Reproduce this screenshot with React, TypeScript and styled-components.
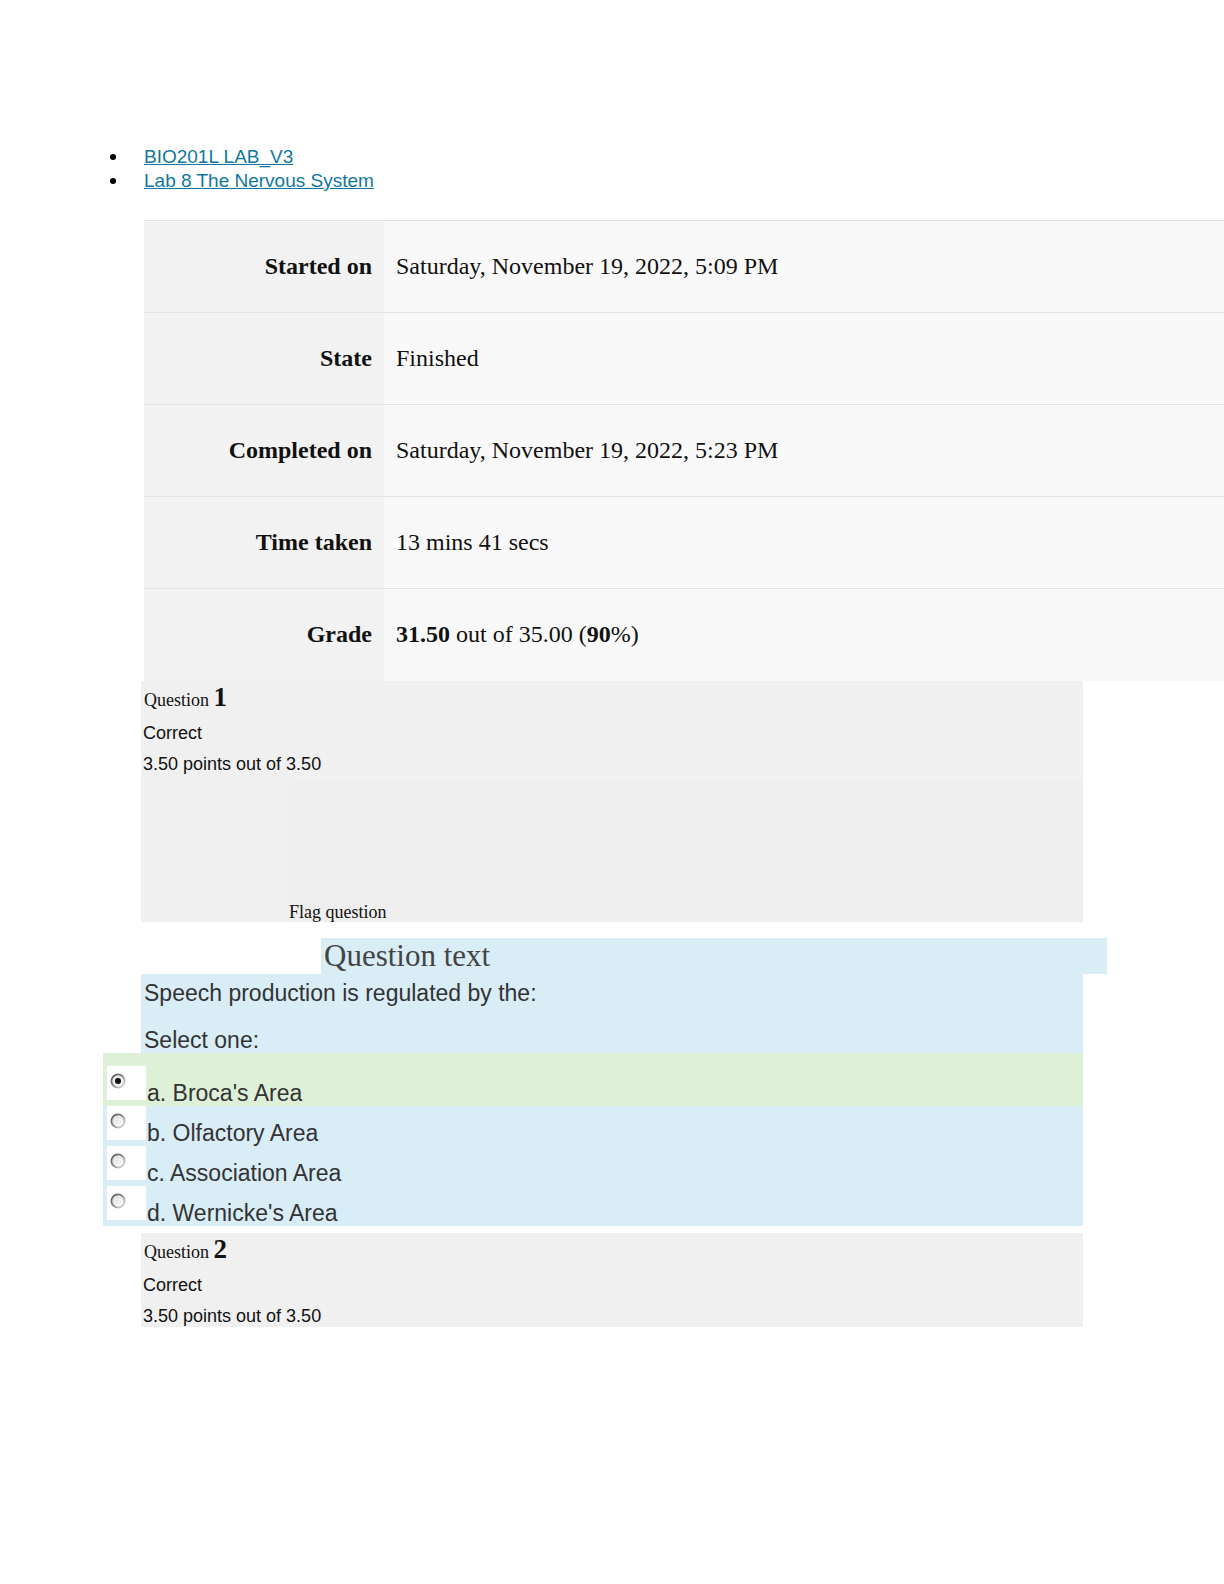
import React from 'react';
import styled, {createGlobalStyle} from 'styled-components';

const GlobalStyle = createGlobalStyle`
    body {
        margin: 0;
        background: #fff;
        font-family: "Liberation Sans", Arial, sans-serif;
    }
`;

interface SummaryRow {
    label: string;
    value: React.ReactNode;
}

const summary: SummaryRow[] = [
    {label: 'Started on', value: 'Saturday, November 19, 2022, 5:09 PM'},
    {label: 'State', value: 'Finished'},
    {label: 'Completed on', value: 'Saturday, November 19, 2022, 5:23 PM'},
    {label: 'Time taken', value: '13 mins 41 secs'},
    {label: 'Grade', value: <><b>31.50</b> out of 35.00 (<b>90</b>%)</>},
];

const answers = [
    {text: "a. Broca's Area", checked: true},
    {text: 'b. Olfactory Area', checked: false},
    {text: 'c. Association Area', checked: false},
    {text: "d. Wernicke's Area", checked: false},
];

function Radio({checked}: { checked: boolean }) {
    return (
        <svg width="16" height="16" viewBox="0 0 16 16">
            <defs>
                <linearGradient id="ring" x1="0" y1="0" x2="1" y2="1">
                    <stop offset="0" stopColor="#555"/>
                    <stop offset="0.5" stopColor="#8a8a8a"/>
                    <stop offset="1" stopColor="#e8e8e8"/>
                </linearGradient>
                <linearGradient id="fill" x1="0" y1="0" x2="1" y2="1">
                    <stop offset="0" stopColor="#dcdcdc"/>
                    <stop offset="1" stopColor="#ffffff"/>
                </linearGradient>
            </defs>
            <circle cx="8" cy="8" r="6.6" fill="url(#fill)" stroke="url(#ring)" strokeWidth="1.8"/>
            {checked && <circle cx="8" cy="8" r="3" fill="#111"/>}
        </svg>
    );
}

function QuestionHeader({no}: { no: number }) {
    return (
        <>
            <QuestionNo>Question <b>{no}</b></QuestionNo>
            <Info>Correct</Info>
            <Info>3.50 points out of 3.50</Info>
        </>
    );
}

function App() {
    return (
        <Page>
            <GlobalStyle/>
            <Breadcrumb>
                <li><Bullet/><a href="#">BIO201L LAB_V3</a></li>
                <li><Bullet/><a href="#">Lab 8 The Nervous System</a></li>
            </Breadcrumb>

            <Summary>
                <tbody>
                {summary.map((row) => (
                    <tr key={row.label}>
                        <th>{row.label}</th>
                        <td>{row.value}</td>
                    </tr>
                ))}
                </tbody>
            </Summary>

            <QuestionBlock>
                <QuestionHeader no={1}/>
                <FlagArea>Flag question</FlagArea>
            </QuestionBlock>

            <QuestionText>Question text</QuestionText>
            <Content>
                <Prompt>Speech production is regulated by the:</Prompt>
                <Prompt $gap>Select one:</Prompt>
                <Answers>
                    {answers.map((a) => (
                        <AnswerRow key={a.text} $correct={a.checked}>
                            <RadioBox><Radio checked={a.checked}/></RadioBox>
                            <AnswerLabel>{a.text}</AnswerLabel>
                        </AnswerRow>
                    ))}
                </Answers>
            </Content>

            <QuestionBlock $spaced>
                <QuestionHeader no={2}/>
            </QuestionBlock>
        </Page>
    );
}

const Page = styled.div`
    padding-bottom: 200px;
`;

const Breadcrumb = styled.ul`
    list-style: none;
    margin: 145px 0 0;
    padding: 0;
    font-size: 19px;
    line-height: 24px;

    li {
        display: flex;
        align-items: center;
    }

    a {
        color: #1177a2;
        text-decoration: underline;
    }
`;

const Bullet = styled.span`
    width: 6px;
    height: 6px;
    border-radius: 50%;
    background: #000;
    margin: 0 28px 0 110px;
`;

const Summary = styled.table`
    margin: 27px 0 0 144px;
    width: 1080px;
    border-collapse: collapse;
    font-family: "Liberation Serif", "Times New Roman", serif;
    font-size: 24px;
    color: #111;

    tr {
        height: 92px;
        border-top: 1px solid #e3e3e3;
    }

    th {
        width: 228px;
        padding: 0 12px 0 0;
        text-align: right;
        background: #f2f2f2;
        font-weight: bold;
    }

    td {
        padding: 0 0 0 12px;
        background: #f9f9f9;
    }
`;

const QuestionBlock = styled.div<{ $spaced?: boolean }>`
    margin: ${({$spaced}) => ($spaced ? '7px' : '0')} 0 0 141px;
    width: 942px;
    background: #f0f0f0;
    color: #111;
    padding-bottom: ${({$spaced}) => ($spaced ? '1px' : '0')};
`;

const QuestionNo = styled.div`
    font-family: "Liberation Serif", "Times New Roman", serif;
    font-size: 18px;
    line-height: 34px;
    padding: 2px 0 0 3px;

    b {
        font-size: 27px;
        line-height: 0;
    }
`;

const Info = styled.div`
    font-size: 18px;
    line-height: 20px;
    padding-left: 2px;
    margin-top: 6px;

    & + & {
        margin-top: 11px;
    }
`;

const FlagArea = styled.div`
    margin: 8px 0 0 148px;
    height: 140px;
    background: #eeeeee;
    display: flex;
    align-items: flex-end;
    font-family: "Liberation Serif", "Times New Roman", serif;
    font-size: 18px;
    line-height: 20px;
`;

const QuestionText = styled.h4`
    margin: 16px 0 0 321px;
    width: 783px;
    height: 36px;
    padding-left: 3px;
    background: #d9edf7;
    font-family: "Liberation Serif", "Times New Roman", serif;
    font-weight: normal;
    font-size: 31px;
    line-height: 36px;
    color: #444;
`;

const Content = styled.div`
    margin-left: 141px;
    width: 942px;
    background: #d9edf7;
    color: #333;
    padding-top: 6px;
`;

const Prompt = styled.p<{ $gap?: boolean }>`
    margin: ${({$gap}) => ($gap ? '21px' : '0')} 0 0;
    padding-left: 3px;
    font-size: 23px;
    line-height: 26px;
`;

const Answers = styled.div`
    margin-left: -38px;
`;

const AnswerRow = styled.div<{ $correct: boolean }>`
    display: flex;
    align-items: flex-start;
    height: 40px;
    padding-top: ${({$correct}) => ($correct ? '13px' : '0')};
    background: ${({$correct}) => ($correct ? '#dff0d8' : '#d9edf7')};
`;

const RadioBox = styled.span`
    width: 36px;
    height: 27px;
    margin-left: 4px;
    padding: 7px 0 0 3px;
    background: #fff;
    flex-shrink: 0;

    svg {
        display: block;
    }
`;

const AnswerLabel = styled.span`
    margin-left: 1px;
    padding-top: 14px;
    font-size: 23px;
    line-height: 26px;
    white-space: nowrap;
`;

export default App;
